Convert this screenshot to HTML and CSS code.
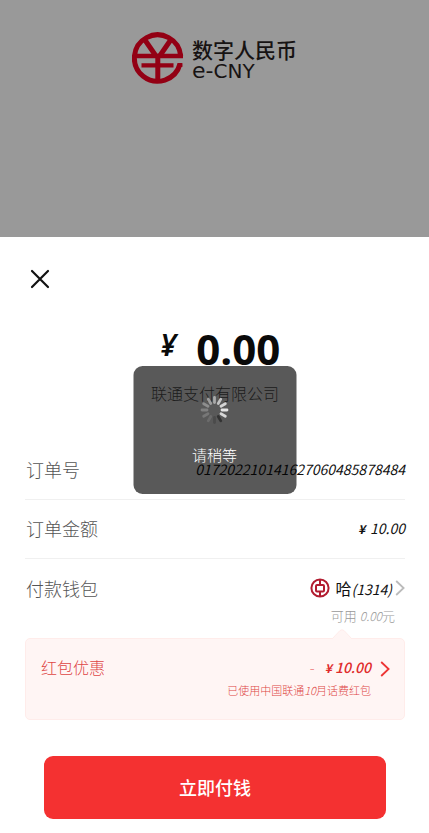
FILE: index.html
```html
<!DOCTYPE html>
<html lang="zh-CN">
<head>
<meta charset="utf-8">
<meta name="viewport" content="width=device-width, initial-scale=1">
<title>数字人民币</title>
<link rel="stylesheet" href="styles.css">
</head>
<body>
<header class="backdrop">
  <svg class="logo-mark" viewBox="0 0 52 52" aria-hidden="true">
    <g fill="none" stroke="#930014" stroke-width="5">
      <path d="M48.7 24A23.2 23.2 0 1 0 48 32"/>
      <path d="M3 24H51" stroke-width="4.4"/>
      <path d="M9.5 33.4H41.5M45.6 33H50.4" stroke-width="4.2"/>
      <path d="M25.8 23V49"/>
      <path d="M12.6 7.5L23.6 23.5M39 7.5L28 23.5"/>
    </g>
  </svg>
  <div class="logo-text">
    <span class="logo-cn">数字人民币</span>
    <span class="logo-en">e-<span class="logo-caps">CNY</span></span>
  </div>
</header>
<main class="sheet">
  <button class="close" aria-label="关闭">
    <svg width="20" height="20" viewBox="0 0 20 20"><path d="M2 2L18 18M18 2L2 18" fill="none" stroke="#111" stroke-width="2.2" stroke-linecap="round"/></svg>
  </button>
  <div class="total"><span class="total-sign">¥</span><span>0.00</span></div>
  <p class="merchant">联通支付有限公司</p>
  <dl class="details">
    <div class="row"><dt>订单号</dt><dd>017202210141627060485878484</dd></div>
    <div class="row"><dt>订单金额</dt><dd><b class="yen">¥</b> 10.00</dd></div>
    <div class="row wallet">
      <dt>付款钱包</dt>
      <dd>
        <svg class="bank" viewBox="0 0 20 20" aria-hidden="true"><g fill="none" stroke="#b21c30" stroke-width="2"><circle cx="10" cy="10" r="8.6"/><rect x="6" y="7" width="8" height="6.4" rx="1"/><path d="M10 1.5V7M10 13.5V18.5"/></g></svg>
        <span class="wallet-name">哈<i>(1314)</i></span>
        <svg class="arrow" viewBox="0 0 10 16" aria-hidden="true"><path d="M1.2 1L8.6 8L1.2 15" fill="none" stroke="#bbb" stroke-width="1.8"/></svg>
      </dd>
    </div>
  </dl>
  <p class="available">可用 <i>0.00</i>元</p>
  <section class="coupon">
    <svg class="tip" viewBox="0 0 20 10" aria-hidden="true"><path d="M0 10L8 1.5Q10 0 12 1.5L20 10" fill="#fff5f4" stroke="#ffecea"/></svg>
    <h2>红包优惠</h2>
    <div class="coupon-value">
      <p class="discount"><span class="minus">-</span><span class="yen-amount"><b class="yen">¥</b> 10.00</span></p>
      <p class="note">已使用中国联通<i>10</i>月话费红包</p>
    </div>
    <svg class="arrow" viewBox="0 0 10 16" aria-hidden="true"><path d="M1.2 1L8.6 8L1.2 15" fill="none" stroke="#ed3434" stroke-width="1.8"/></svg>
  </section>
  <button class="pay">立即付钱</button>
  <div class="toast" role="status">
    <svg class="spinner" viewBox="-15 -15 30 30" aria-hidden="true">
      <g stroke-width="2.8" stroke-linecap="round">
        <path d="M0-7.5V-12.5" stroke="#aaa"/>
        <path d="M0-7.5V-12.5" stroke="#c2c2c2" transform="rotate(30)"/>
        <path d="M0-7.5V-12.5" stroke="#d5d5d5" transform="rotate(60)"/>
        <path d="M0-7.5V-12.5" stroke="#e5e5e5" transform="rotate(90)"/>
        <path d="M0-7.5V-12.5" stroke="#d8d8d8" transform="rotate(120)"/>
        <path d="M0-7.5V-12.5" stroke="#333" transform="rotate(150)"/>
        <path d="M0-7.5V-12.5" stroke="#4b4b4b" transform="rotate(180)"/>
        <path d="M0-7.5V-12.5" stroke="#6b6b6b" transform="rotate(210)"/>
        <path d="M0-7.5V-12.5" stroke="#777" transform="rotate(240)"/>
        <path d="M0-7.5V-12.5" stroke="#808080" transform="rotate(270)"/>
        <path d="M0-7.5V-12.5" stroke="#8e8e8e" transform="rotate(300)"/>
        <path d="M0-7.5V-12.5" stroke="#9c9c9c" transform="rotate(330)"/>
      </g>
    </svg>
    <span>请稍等</span>
  </div>
</main>
</body>
</html>
```
FILE: styles.css
```css
* { box-sizing: border-box; margin: 0; padding: 0; }

body {
  min-height: 100vh;
  background: #fff;
  color: #222;
  font-family: "Noto Sans CJK SC", sans-serif;
  font-weight: 300;
}

button { border: 0; font-family: inherit; }
svg { display: block; flex: none; }

.backdrop {
  display: flex;
  justify-content: center;
  gap: 8px;
  padding: 32px 0 153px;
  background: #999;
}
.logo-mark { width: 52px; height: 52px; }
.logo-text {
  display: flex;
  flex-direction: column;
  padding-top: 6px;
  color: #171313;
}
.logo-cn { font-size: 21px; line-height: 22px; font-weight: 500; }
.logo-en { font: 22px/22px "DejaVu Sans", sans-serif; }
.logo-caps { font-size: 20px; }

.sheet { position: relative; padding: 32px 24px 14px 25px; }
.close { display: block; margin-left: 5px; background: none; }

.total {
  display: flex;
  justify-content: center;
  align-items: center;
  gap: 20px;
  margin-top: 36px;
  padding-left: 10px;
  color: #0a0a0a;
  font: 700 42px/48px "Open Sans", sans-serif;
}
.total-sign { padding-bottom: 8px; font: italic 600 30px/40px "Noto Sans", sans-serif; }
.merchant { margin-top: 8px; text-align: center; font-size: 16px; line-height: 24px; color: #555; }

.details { margin-top: 36px; }
.row {
  display: flex;
  justify-content: space-between;
  align-items: center;
  height: 59px;
  padding-bottom: 2px;
  border-bottom: 1px solid #f0f0f0;
}
.row:last-child { border: 0; }
dt { padding-left: 1px; font-size: 18px; color: #555; }
dd { display: flex; align-items: center; gap: 5px; font-size: 14px; font-style: italic; color: #111; }
dd, .discount { font-weight: 400; }
.yen { font-size: 12px; font-weight: 700; }
.bank { width: 20px; height: 20px; }
.wallet-name { margin-right: -2px; font-size: 16px; font-style: normal; }
.wallet-name i { font-size: 14px; }
.arrow { width: 10px; height: 16px; }
.available {
  margin-top: -10px;
  padding-right: 10px;
  text-align: right;
  font-size: 13px;
  line-height: 16px;
  color: #999;
}
.available i { font-size: 12px; }

.coupon {
  position: relative;
  display: flex;
  align-items: flex-start;
  gap: 9px;
  min-height: 82px;
  margin-top: 14px;
  padding: 16px 14px 16px 15px;
  border: 1px solid #ffecea;
  border-radius: 5px;
  background: #fff5f4;
  color: #de4545;
}
.tip { position: absolute; right: 52px; top: -10px; width: 20px; height: 10px; }
.coupon h2 { flex: 1; font-size: 16px; line-height: 24px; font-weight: 300; }
.coupon-value { text-align: right; }
.discount {
  display: flex;
  justify-content: flex-end;
  gap: 10px;
  font-size: 14px;
  line-height: 24px;
  font-style: italic;
  color: #e02c2c;
}
.yen-amount { font-weight: 500; }
.minus { opacity: .5; font-style: normal; }
.note { font-size: 11px; line-height: 20px; }
.coupon .arrow { margin-top: 6px; }

.pay {
  display: block;
  width: calc(100% - 38px);
  margin: 36px auto 0;
  padding: 18px;
  border-radius: 9px;
  background: #f43131;
  color: #fff;
  font-size: 18px;
  line-height: 27px;
  font-weight: 500;
}

.toast {
  position: absolute;
  left: 50%;
  top: 129px;
  width: 163px;
  transform: translateX(-50%);
  display: flex;
  flex-direction: column;
  align-items: center;
  gap: 18px;
  padding: 29px 0 27px;
  border-radius: 9px;
  background: rgba(0, 0, 0, .65);
  color: #fff;
  font-size: 15px;
  line-height: 24px;
}
.spinner { width: 30px; height: 30px; }
```
